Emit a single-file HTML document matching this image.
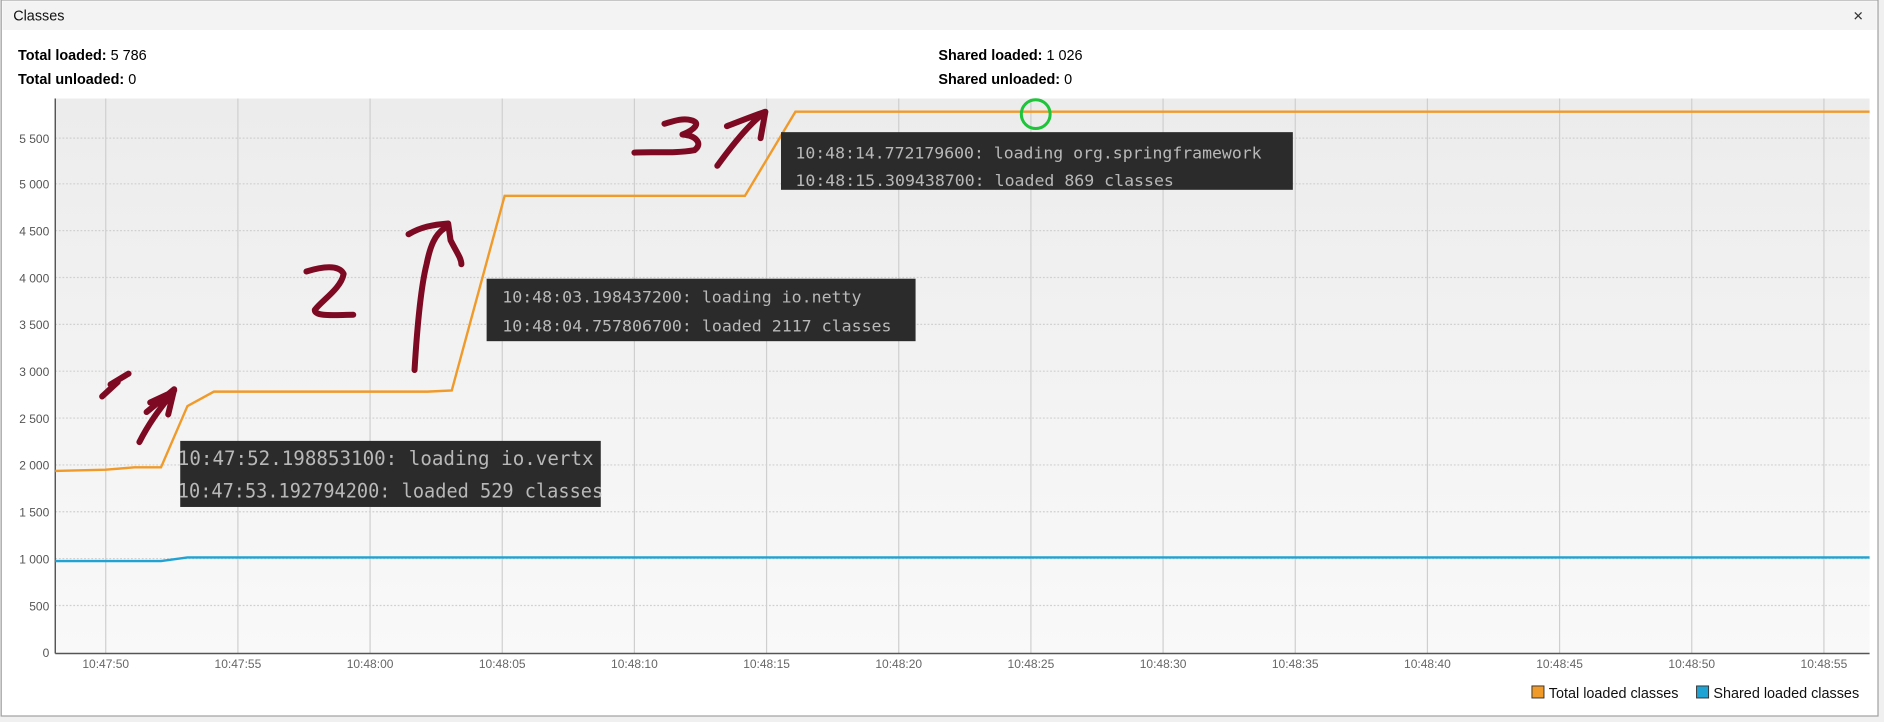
<!DOCTYPE html>
<html><head><meta charset="utf-8"><style>
html,body{margin:0;padding:0;background:#f0f0f0;}
svg{display:block;}
</style></head><body>
<svg width="1884" height="722" viewBox="0 0 1568 601" preserveAspectRatio="none" xmlns="http://www.w3.org/2000/svg" font-family="Liberation Sans, sans-serif">
<defs>
<linearGradient id="bg" x1="0" y1="0" x2="0" y2="1"><stop offset="0" stop-color="#ececec"/><stop offset="1" stop-color="#f9f9f9"/></linearGradient>
</defs>
<rect x="0" y="0" width="1568" height="601" fill="#f0f0f0"/>
<rect x="1" y="0" width="1562" height="596" fill="#fff" stroke="#a0a0a0"/>
<rect x="2" y="1" width="1560" height="24" fill="#f3f3f3"/>
<text x="11" y="17" font-size="12" fill="#111">Classes</text>
<text x="1542" y="17" font-size="11" fill="#333">✕</text>
<text x="15" y="50" font-size="12" fill="#000"><tspan font-weight="bold">Total loaded:</tspan> 5 786</text>
<text x="15" y="70" font-size="12" fill="#000"><tspan font-weight="bold">Total unloaded:</tspan> 0</text>
<text x="781" y="50" font-size="12" fill="#000"><tspan font-weight="bold">Shared loaded:</tspan> 1 026</text>
<text x="781" y="70" font-size="12" fill="#000"><tspan font-weight="bold">Shared unloaded:</tspan> 0</text>
<rect x="46" y="82" width="1510" height="462" fill="url(#bg)"/>
<g stroke="#cfcfcf" stroke-width="1">
<line x1="88" y1="82" x2="88" y2="544"/><line x1="198" y1="82" x2="198" y2="544"/><line x1="308" y1="82" x2="308" y2="544"/><line x1="418" y1="82" x2="418" y2="544"/><line x1="528" y1="82" x2="528" y2="544"/><line x1="638" y1="82" x2="638" y2="544"/><line x1="748" y1="82" x2="748" y2="544"/><line x1="858" y1="82" x2="858" y2="544"/><line x1="968" y1="82" x2="968" y2="544"/><line x1="1078" y1="82" x2="1078" y2="544"/><line x1="1188" y1="82" x2="1188" y2="544"/><line x1="1298" y1="82" x2="1298" y2="544"/><line x1="1408" y1="82" x2="1408" y2="544"/><line x1="1518" y1="82" x2="1518" y2="544"/>
</g>
<g stroke="#d0d0d0" stroke-dasharray="1.5 1.5">
<line x1="46" y1="115" x2="1556" y2="115"/><line x1="46" y1="153" x2="1556" y2="153"/><line x1="46" y1="192" x2="1556" y2="192"/><line x1="46" y1="231" x2="1556" y2="231"/><line x1="46" y1="270" x2="1556" y2="270"/><line x1="46" y1="309" x2="1556" y2="309"/><line x1="46" y1="348" x2="1556" y2="348"/><line x1="46" y1="387" x2="1556" y2="387"/><line x1="46" y1="426" x2="1556" y2="426"/><line x1="46" y1="465" x2="1556" y2="465"/><line x1="46" y1="504" x2="1556" y2="504"/>
</g>
<g stroke="#555" stroke-width="1.2"><line x1="46" y1="82" x2="46" y2="544"/><line x1="46" y1="544" x2="1556" y2="544"/></g>
<g font-size="10" fill="#555" text-anchor="end">
<text x="41" y="119">5 500</text><text x="41" y="157">5 000</text><text x="41" y="196">4 500</text><text x="41" y="235">4 000</text><text x="41" y="274">3 500</text><text x="41" y="313">3 000</text><text x="41" y="352">2 500</text><text x="41" y="391">2 000</text><text x="41" y="430">1 500</text><text x="41" y="469">1 000</text><text x="41" y="508">500</text><text x="41" y="547">0</text>
</g>
<g font-size="10" fill="#666" text-anchor="middle">
<text x="88" y="556">10:47:50</text><text x="198" y="556">10:47:55</text><text x="308" y="556">10:48:00</text><text x="418" y="556">10:48:05</text><text x="528" y="556">10:48:10</text><text x="638" y="556">10:48:15</text><text x="748" y="556">10:48:20</text><text x="858" y="556">10:48:25</text><text x="968" y="556">10:48:30</text><text x="1078" y="556">10:48:35</text><text x="1188" y="556">10:48:40</text><text x="1298" y="556">10:48:45</text><text x="1408" y="556">10:48:50</text><text x="1518" y="556">10:48:55</text>
</g>
<polyline fill="none" stroke="#1fa3d4" stroke-width="2" points="46,467 134,467 156,464 1556,464"/>
<polyline fill="none" stroke="#f09a2a" stroke-width="2" points="46,392 88,391 112,389 134,389 156,338 178,326 356,326 376,325 420,163 620,163 662,93 1556,93"/>
<g font-family="DejaVu Sans Mono, Liberation Mono, monospace" font-size="13.5" fill="#b8b8b8">
<rect x="150" y="367" width="350" height="55" fill="#2b2b2b"/>
<text x="148" y="387" font-size="16" textLength="346" lengthAdjust="spacingAndGlyphs">10:47:52.198853100: loading io.vertx</text>
<text x="148" y="414" font-size="16" textLength="354" lengthAdjust="spacingAndGlyphs">10:47:53.192794200: loaded 529 classes</text>
<rect x="405" y="232" width="357" height="52" fill="#2b2b2b"/>
<text x="418" y="252" textLength="299" lengthAdjust="spacingAndGlyphs">10:48:03.198437200: loading io.netty</text>
<text x="418" y="276" textLength="324" lengthAdjust="spacingAndGlyphs">10:48:04.757806700: loaded 2117 classes</text>
<rect x="650" y="110" width="426" height="48" fill="#2b2b2b"/>
<text x="662" y="132" textLength="388" lengthAdjust="spacingAndGlyphs">10:48:14.772179600: loading org.springframework</text>
<text x="662" y="155" textLength="315" lengthAdjust="spacingAndGlyphs">10:48:15.309438700: loaded 869 classes</text>
</g>
<circle cx="862" cy="95" r="12" fill="none" stroke="#1ec43a" stroke-width="2.5"/>
<g fill="none" stroke="#7d0a22" stroke-width="5" stroke-linecap="round" stroke-linejoin="round">
<path d="M85,330 L98,318 M92,320 L107,311"/>
<path d="M116,368 C125,350 135,338 145,325 M122,343 L145,324 L140,345 M125,335 L140,328"/>
<path d="M255,226 C268,222 282,220 286,228 C284,240 268,250 262,258 C262,264 280,262 294,262"/>
<path d="M345,308 C347,275 350,240 355,220 C358,205 362,195 370,190 M340,195 C350,189 360,187 373,186 L375,200 C380,210 384,215 384,220"/>
<path d="M528,127 C545,126 560,128 578,125 C585,120 580,113 568,112 C578,108 584,102 575,100 C568,98 560,101 553,103"/>
<path d="M597,138 C610,120 625,102 636,94 M605,105 C618,100 628,96 637,93 L633,115"/>
</g>
<rect x="1275" y="571" width="10" height="10" fill="#f09a2a" stroke="#333" stroke-width="0.8"/>
<text x="1289" y="581" font-size="12" fill="#111">Total loaded classes</text>
<rect x="1412" y="571" width="10" height="10" fill="#1fa3d4" stroke="#333" stroke-width="0.8"/>
<text x="1426" y="581" font-size="12" fill="#111">Shared loaded classes</text>
</svg>
</body></html>
